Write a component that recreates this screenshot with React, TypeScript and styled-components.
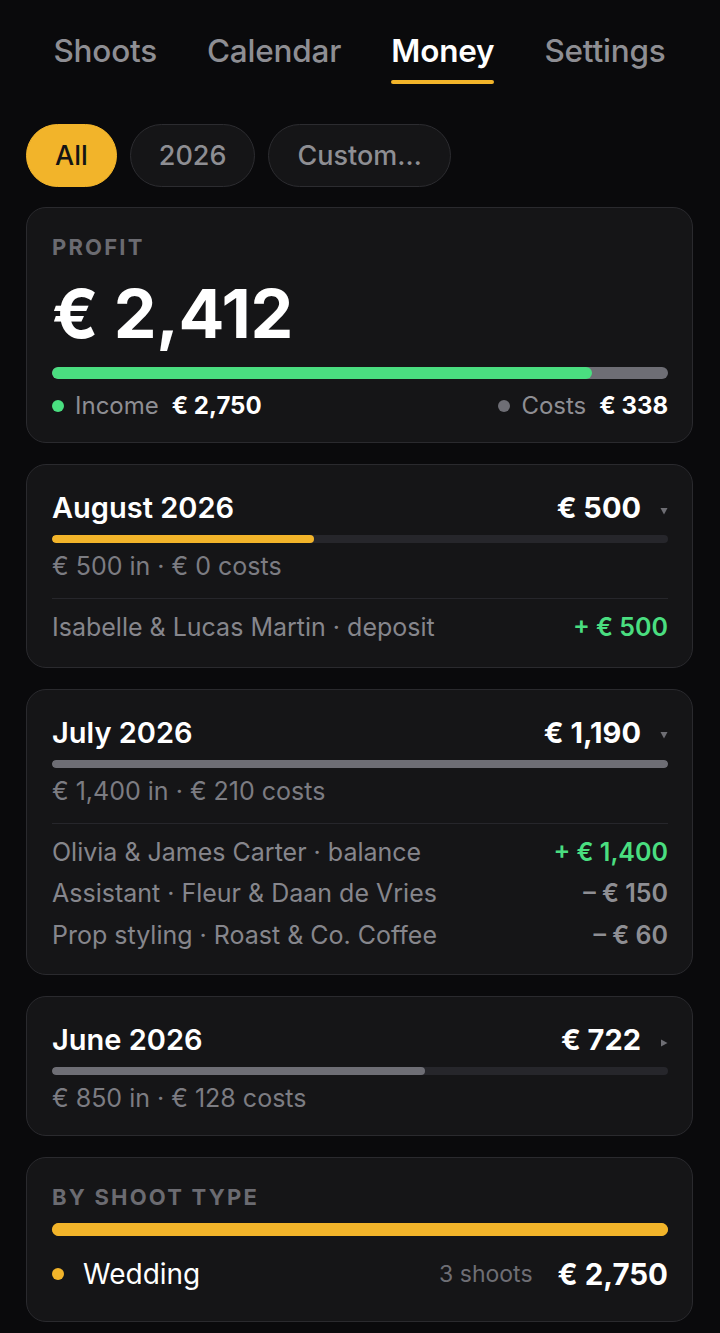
import React from 'react'
import styled, { createGlobalStyle } from 'styled-components'

const GlobalStyle = createGlobalStyle`
  html, body {
    margin: 0;
    padding: 0;
    background: #0a0a0c;
  }
  body {
    font-family: Inter, 'Noto Sans', 'Liberation Sans', sans-serif;
    color: #f5f5f7;
    -webkit-font-smoothing: antialiased;
  }
  * {
    box-sizing: border-box;
  }
`

const Page = styled.div`
  width: 720px;
  min-height: 1333px;
  padding: 0 27px 10px 26px;
  background: #0a0a0c;
`

const Tabs = styled.nav`
  display: flex;
  justify-content: center;
  gap: 50px;
  padding-top: 28px;
`

const Tab = styled.div<{ $active?: boolean }>`
  position: relative;
  font-size: 31.5px;
  line-height: 46px;
  font-weight: ${(p) => (p.$active ? 600 : 500)};
  color: ${(p) => (p.$active ? '#ffffff' : '#8e8e93')};
  letter-spacing: -0.2px;

  &::after {
    content: '';
    display: ${(p) => (p.$active ? 'block' : 'none')};
    position: absolute;
    left: 0;
    right: 0;
    bottom: -10px;
    height: 4px;
    border-radius: 2px;
    background: #f2b42a;
  }
`

const Filters = styled.div`
  display: flex;
  gap: 13px;
  margin-top: 50px;
  margin-bottom: 20px;
`

const Chip = styled.button<{ $active?: boolean }>`
  height: 63px;
  padding: 0 28px;
  border-radius: 32px;
  font-family: inherit;
  font-size: 27px;
  font-weight: 500;
  border: 1px solid ${(p) => (p.$active ? '#f2b42a' : '#2c2c30')};
  background: ${(p) => (p.$active ? '#f2b42a' : '#151517')};
  color: ${(p) => (p.$active ? '#141414' : '#8e8e93')};
`

const Stack = styled.div`
  display: flex;
  flex-direction: column;
  gap: 21px;
`

const Card = styled.section<{ $pb?: number }>`
  background: #151517;
  border: 1px solid #2a2a2e;
  border-radius: 20px;
  padding: 25px 24px ${(p) => p.$pb ?? 21}px 25px;
`

const Label = styled.div`
  font-size: 22px;
  font-weight: 700;
  letter-spacing: 2.2px;
  color: #6b6b71;
  text-transform: uppercase;
  line-height: 28px;
`

const BigAmount = styled.div`
  font-size: 68px;
  font-weight: 700;
  letter-spacing: -0.4px;
  line-height: 80px;
  margin-top: 12px;
  color: #ffffff;
`

const Track = styled.div<{ $h: number; $bg: string; $mt: number }>`
  height: ${(p) => p.$h}px;
  border-radius: ${(p) => p.$h / 2}px;
  background: ${(p) => p.$bg};
  margin-top: ${(p) => p.$mt}px;
  overflow: hidden;
`

const Fill = styled.div<{ $color: string }>`
  height: 100%;
  border-radius: inherit;
  background: ${(p) => p.$color};
`

const Legend = styled.div`
  display: flex;
  justify-content: space-between;
  align-items: center;
  margin-top: 12px;
  font-size: 24px;
  line-height: 30px;
`

const LegendItem = styled.div`
  display: flex;
  align-items: center;
  gap: 11px;
  color: #8e8e93;

  b {
    color: #ffffff;
    font-weight: 700;
    margin-left: 2px;
  }
`

const Dot = styled.span<{ $color: string; $size?: number }>`
  width: ${(p) => p.$size ?? 12}px;
  height: ${(p) => p.$size ?? 12}px;
  border-radius: 50%;
  background: ${(p) => p.$color};
  flex-shrink: 0;
`

const MonthHead = styled.div`
  display: flex;
  align-items: center;
  justify-content: space-between;
  line-height: 36px;
`

const MonthTitle = styled.div`
  font-size: 29px;
  font-weight: 600;
  color: #ffffff;
`

const MonthTotal = styled.div`
  display: flex;
  align-items: center;
  gap: 19px;
  font-size: 29px;
  font-weight: 700;
  color: #ffffff;
`

const Summary = styled.div`
  font-size: 25px;
  color: #7c7c82;
  line-height: 32px;
  margin-top: 7px;
`

const Divider = styled.div`
  height: 1px;
  background: #26262b;
  margin: 16px 0 8px;
`

const Items = styled.div`
  margin-bottom: -3px;
`

const Row = styled.div`
  display: flex;
  justify-content: space-between;
  align-items: center;
  font-size: 25px;
  line-height: 41.5px;
  color: #86868c;
`

const Amount = styled.span<{ $tone: 'in' | 'out' }>`
  font-weight: 600;
  color: ${(p) => (p.$tone === 'in' ? '#4ade80' : '#8e8e93')};
`

const TypeRow = styled.div`
  display: flex;
  align-items: center;
  margin-top: 20px;
  line-height: 36px;
`

const TypeName = styled.div`
  flex: 1;
  font-size: 28px;
  color: #ffffff;
  margin-left: 19px;
`

const TypeCount = styled.div`
  font-size: 23px;
  color: #6e6e74;
  margin-right: 25px;
`

const TypeAmount = styled.div`
  font-size: 29.5px;
  font-weight: 700;
  color: #ffffff;
`

const Caret = ({ open }: { open: boolean }) => (
  <svg width="8" height="8" viewBox="0 0 8 8" style={{ marginTop: 5 }}>
    {open ? <path d="M0.5 1h7L4 7.5z" fill="#6e6e74" /> : <path d="M1 0.5v7L7.5 4z" fill="#6e6e74" />}
  </svg>
)

type Tx = { label: string; amount: string; tone: 'in' | 'out' }

type Month = {
  title: string
  total: string
  bar: number
  barColor: string
  summary: string
  open: boolean
  items: Tx[]
}

const months: Month[] = [
  {
    title: 'August 2026',
    total: '€ 500',
    bar: 42.5,
    barColor: '#f2b42a',
    summary: '€ 500 in · € 0 costs',
    open: true,
    items: [{ label: 'Isabelle & Lucas Martin · deposit', amount: '+ € 500', tone: 'in' }],
  },
  {
    title: 'July 2026',
    total: '€ 1,190',
    bar: 100,
    barColor: '#6e6e75',
    summary: '€ 1,400 in · € 210 costs',
    open: true,
    items: [
      { label: 'Olivia & James Carter · balance', amount: '+ € 1,400', tone: 'in' },
      { label: 'Assistant · Fleur & Daan de Vries', amount: '– € 150', tone: 'out' },
      { label: 'Prop styling · Roast & Co. Coffee', amount: '– € 60', tone: 'out' },
    ],
  },
  {
    title: 'June 2026',
    total: '€ 722',
    bar: 60.5,
    barColor: '#6e6e75',
    summary: '€ 850 in · € 128 costs',
    open: false,
    items: [],
  },
]

export default function App() {
  return (
    <Page>
      <GlobalStyle />
      <Tabs>
        <Tab>Shoots</Tab>
        <Tab>Calendar</Tab>
        <Tab $active>Money</Tab>
        <Tab>Settings</Tab>
      </Tabs>

      <Filters>
        <Chip $active>All</Chip>
        <Chip>2026</Chip>
        <Chip>Custom…</Chip>
      </Filters>

      <Stack>
        <Card>
          <Label>Profit</Label>
          <BigAmount>€ 2,412</BigAmount>
          <Track $h={12} $bg="#6e6e75" $mt={14}>
            <Fill $color="#4ade80" style={{ width: '87.7%' }} />
          </Track>
          <Legend>
            <LegendItem>
              <Dot $color="#4ade80" />
              Income <b>€ 2,750</b>
            </LegendItem>
            <LegendItem>
              <Dot $color="#6e6e75" />
              Costs <b>€ 338</b>
            </LegendItem>
          </Legend>
        </Card>

        {months.map((m) => (
          <Card key={m.title}>
            <MonthHead>
              <MonthTitle>{m.title}</MonthTitle>
              <MonthTotal>
                {m.total}
                <Caret open={m.open} />
              </MonthTotal>
            </MonthHead>
            <Track $h={8} $bg="#26262b" $mt={9}>
              <Fill $color={m.barColor} style={{ width: `${m.bar}%` }} />
            </Track>
            <Summary>{m.summary}</Summary>
            {m.items.length > 0 && (
              <>
                <Divider />
                <Items>
                  {m.items.map((t) => (
                    <Row key={t.label}>
                      <span>{t.label}</span>
                      <Amount $tone={t.tone}>{t.amount}</Amount>
                    </Row>
                  ))}
                </Items>
              </>
            )}
          </Card>
        ))}

        <Card $pb={29}>
          <Label>By shoot type</Label>
          <Track $h={13} $bg="#f2b42a" $mt={12}>
            <Fill $color="#f2b42a" style={{ width: '100%' }} />
          </Track>
          <TypeRow>
            <Dot $color="#f2b42a" $size={12} />
            <TypeName>Wedding</TypeName>
            <TypeCount>3 shoots</TypeCount>
            <TypeAmount>€ 2,750</TypeAmount>
          </TypeRow>
        </Card>
      </Stack>
    </Page>
  )
}
